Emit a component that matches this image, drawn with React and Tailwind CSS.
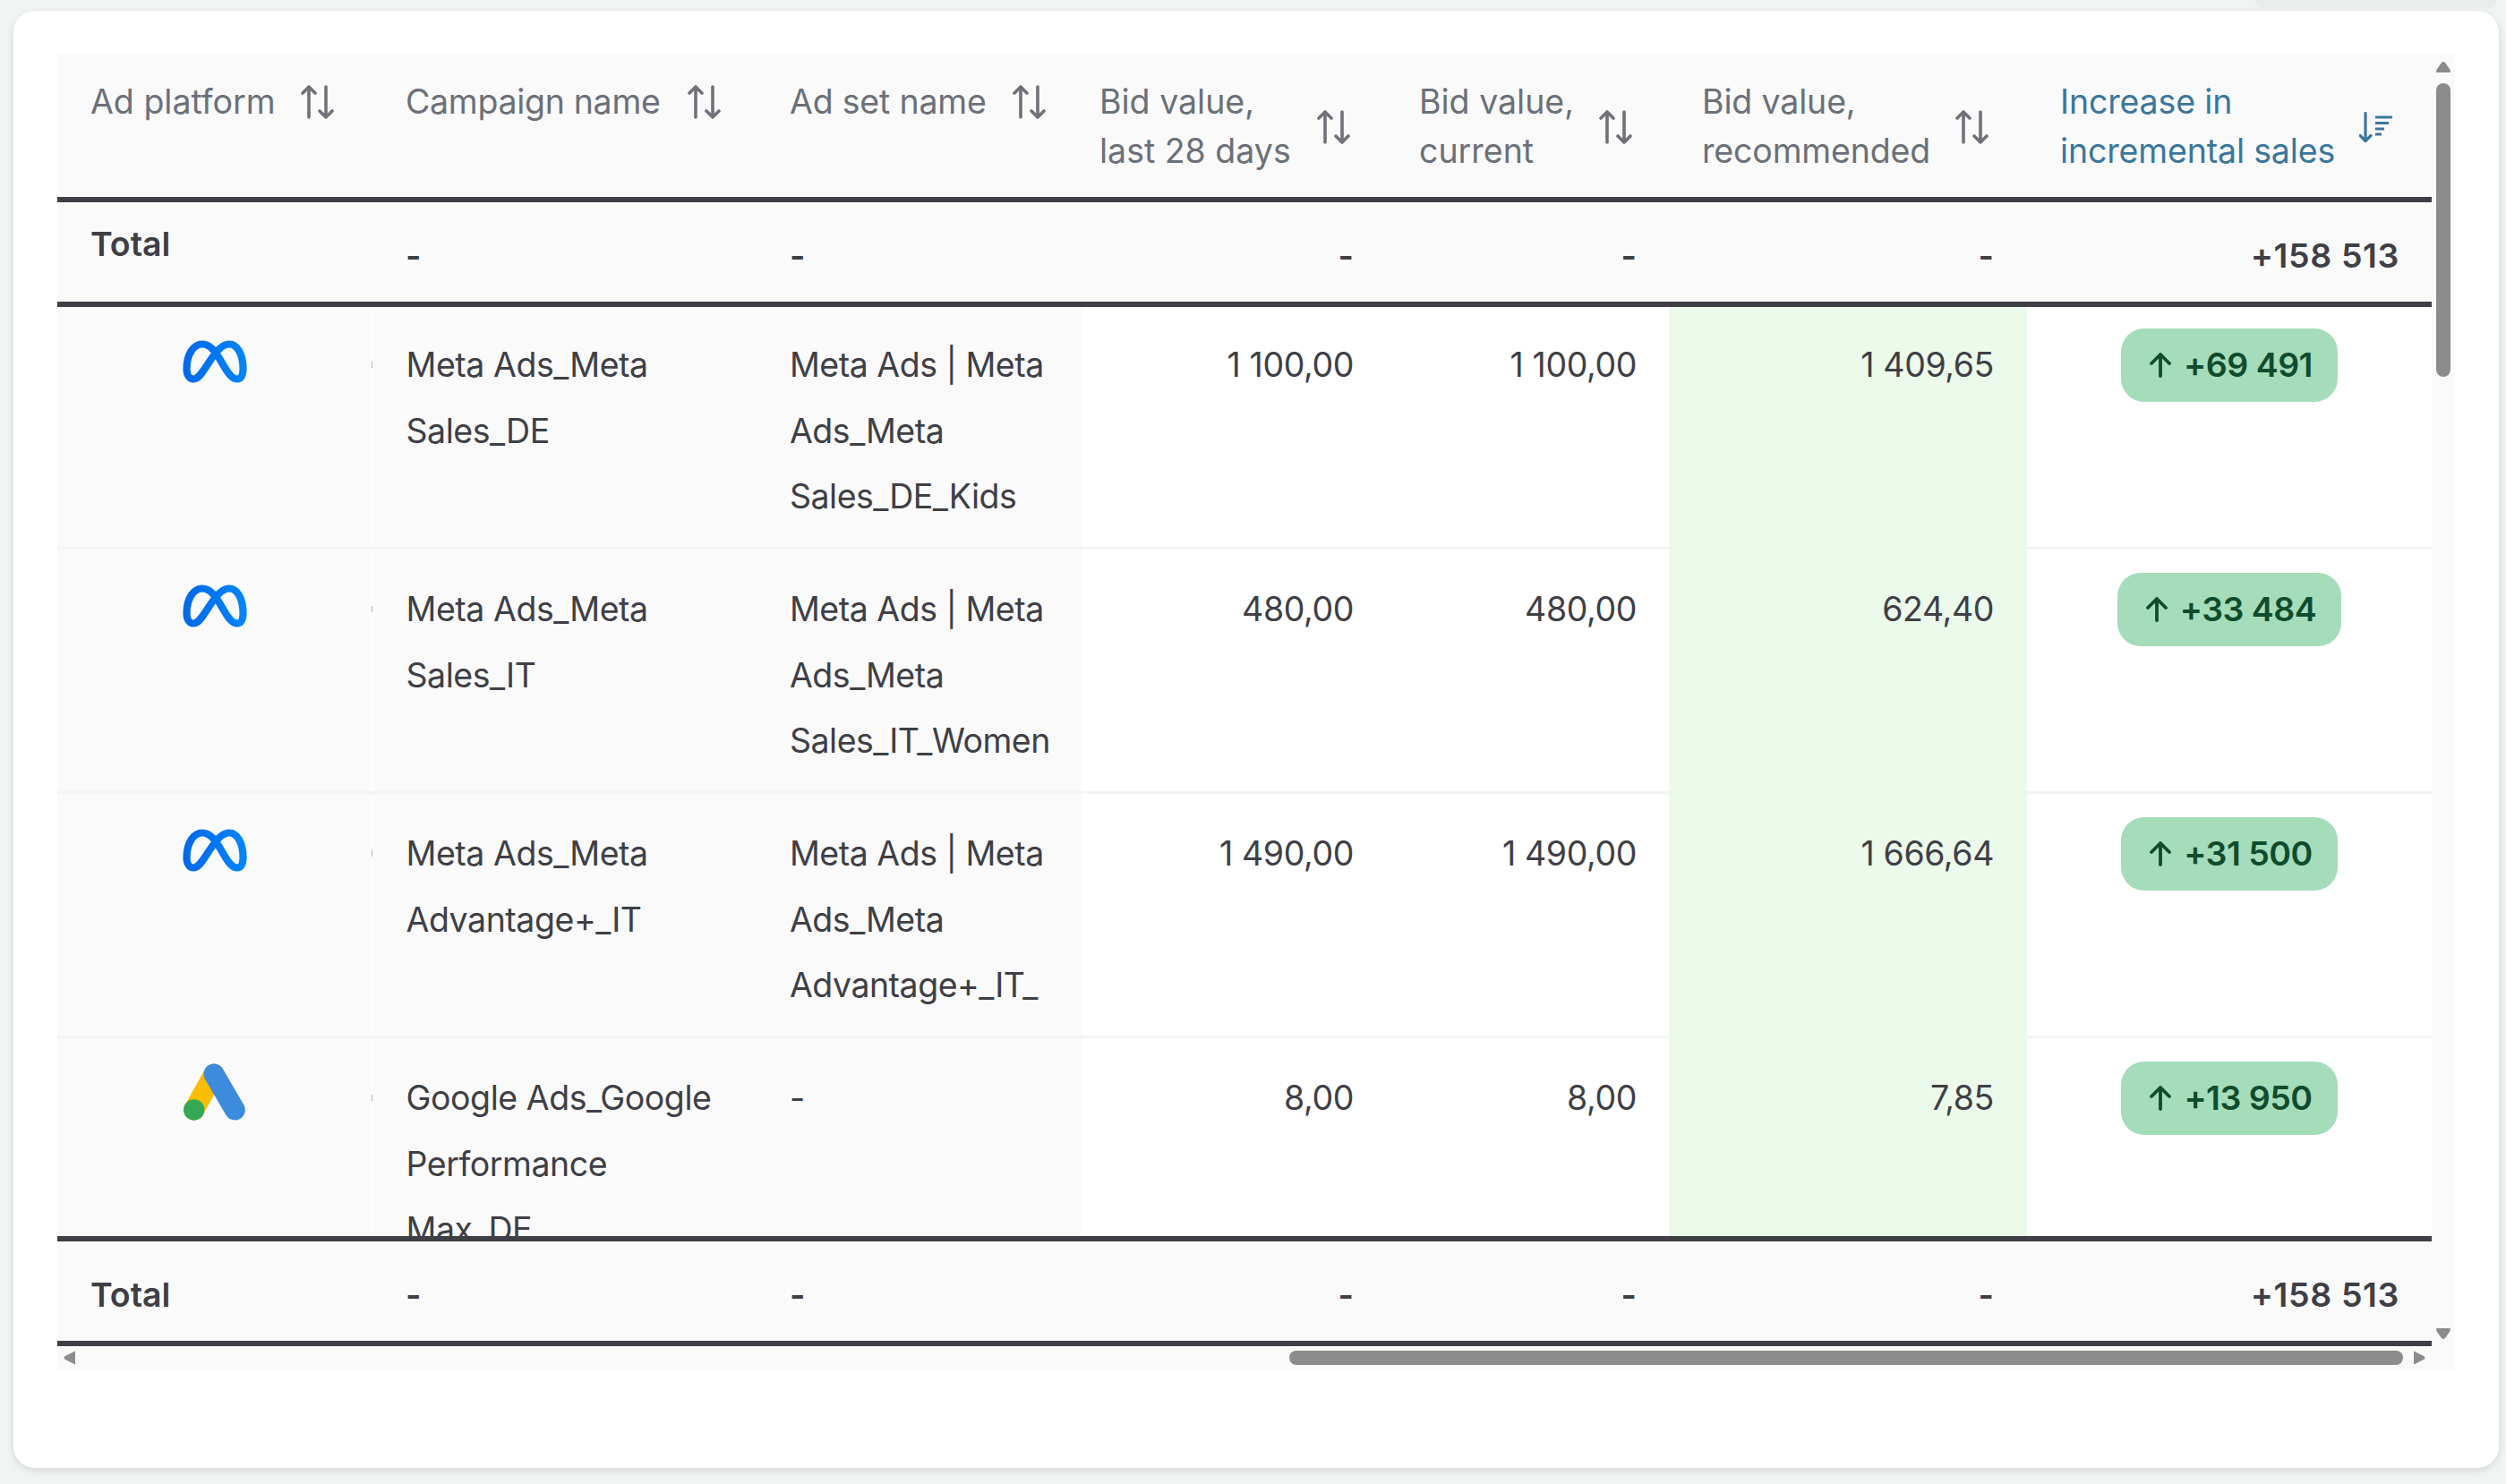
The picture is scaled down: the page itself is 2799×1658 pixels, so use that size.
import React from "react";

const cols = "grid grid-cols-[351px_432px_361px_340px_316px_400px_452px]";

function SortIcon() {
  return (
    <svg width="38" height="38" viewBox="0 0 38 38" fill="none" stroke="#71717a" strokeWidth="3.6" strokeLinecap="round" strokeLinejoin="round" className="shrink-0">
      <path d="M9 36V2M2 9l7-7 7 7" />
      <path d="M28 2v34M21 29l7 7 7-7" />
    </svg>
  );
}

function SortDescIcon() {
  return (
    <svg width="38" height="34" viewBox="0 0 38 34" fill="none" stroke="#3b769c" strokeWidth="3.2" strokeLinecap="round" strokeLinejoin="round" className="shrink-0">
      <path d="M7 1.500v31M1 26.500l6 6 6-6" />
      <path d="M18 6h19M18 12.500h15M18 19h10M18 25h7" strokeLinecap="butt" />
    </svg>
  );
}

function MetaLogo() {
  return (
    <svg width="72" height="48" viewBox="0 0 72 48" fill="none" className="absolute left-[140px] top-[39px]">
      <defs>
        <linearGradient id="metaG" x1="0" y1="0" x2="72" y2="0" gradientUnits="userSpaceOnUse">
          <stop offset="0" stopColor="#0068e8" />
          <stop offset="1" stopColor="#0085fc" />
        </linearGradient>
      </defs>
      <path
        d="M4.500 32C4.500 16 12 4.500 22 4.500 31 4.500 37 13 44 25.500 51 38 55.500 43.500 61 43.500 65 43.500 67.500 39.500 67.500 32 67.500 16 61 4.500 52 4.500 44 4.500 37.500 12 27 28.500 20.500 38.500 17 43.500 12 43.500 7.500 43.500 4.500 39 4.500 32Z"
        stroke="url(#metaG)"
        strokeWidth="8.200"
        strokeLinejoin="round"
      />
    </svg>
  );
}

function GoogleLogo() {
  return (
    <svg width="69" height="64" viewBox="0 0 69 64" fill="none" className="absolute left-[141px] top-[28px]">
      <path d="M34 12 11.700 52" stroke="#fbbc04" strokeWidth="23" strokeLinecap="round" />
      <path d="M34 12 57.300 52" stroke="#3d8bdc" strokeWidth="23" strokeLinecap="round" />
      <circle cx="11.700" cy="52" r="11.700" fill="#34a853" />
    </svg>
  );
}

function Head({ lines, active, pl = "pl-[37px]", gap, track = "", icon }) {
  return (
    <div className={`${pl} pt-[27px]`}>
      <div className={`flex items-center ${gap}`}>
        <div className={`leading-[54.500px] whitespace-nowrap ${track} ${active ? "text-[#3b769c]" : "text-[#6b7079]"}`}>
          {lines.map((l) => (
            <div key={l}>{l}</div>
          ))}
        </div>
        {icon}
      </div>
    </div>
  );
}

function TotalRow({ top }) {
  const d = "pt-[33px] leading-[54px]";
  return (
    <div className={`${cols} h-[111px] bg-[#fafafa] font-semibold text-[#3f3f46]`}>
      <div className={`pl-[37px] ${top ? "pt-[20px] leading-[54px]" : d}`}>Total</div>
      <div className={`pl-[38px] ${d}`}>-</div>
      <div className={`pl-[35px] ${d}`}>-</div>
      <div className={`pr-[36px] text-right ${d}`}>-</div>
      <div className={`pr-[36px] text-right ${d}`}>-</div>
      <div className={`pr-[37px] text-right ${d}`}>-</div>
      <div className={`pr-[36px] text-right tracking-[0.600px] ${d}`}>+158 513</div>
    </div>
  );
}

function Row({ logo, camp, set, v1, v2, v3, inc, first }) {
  return (
    <div className={`${cols} h-[273px] ${first ? "-mt-[2px]" : ""} border-b-[3px] border-[#f4f4f5] text-[#3f3f46] leading-[73.500px]`}>
      <div className="relative bg-[#fafafa]">{logo}</div>
      <div className="relative border-l border-white bg-[#fafafa] pl-[37.500px] pt-[30px] tracking-[-0.450px]">
        <div className="absolute -left-px top-[63px] h-[7px] w-px bg-[#b5b5b8]" />
        {camp.map((l) => (
          <div key={l} className="whitespace-nowrap">{l}</div>
        ))}
      </div>
      <div className="bg-[#fafafa] pl-[35px] pt-[30px] tracking-[-0.500px]">
        {set.map((l) => (
          <div key={l} className="whitespace-nowrap">{l}</div>
        ))}
      </div>
      <div className="bg-white pr-[36px] pt-[30px] text-right tracking-[-0.400px]">{v1}</div>
      <div className="bg-white pr-[36px] pt-[30px] text-right tracking-[-0.400px]">{v2}</div>
      <div className="-mb-[3px] bg-[#ebfaea] pr-[37px] pt-[30px] text-right tracking-[-0.400px]">{v3}</div>
      <div className="flex justify-center bg-white pt-[26px]">
        <div className="inline-flex h-[82px] items-center gap-[13px] self-start rounded-[26px] bg-[#a5dcba] pl-[31px] pr-[28px] font-semibold tracking-[-0.500px] text-[#0f4c2e]">
          <svg width="26" height="28" viewBox="0 0 26 28" fill="none" stroke="#0f4c2e" strokeWidth="3.800" strokeLinecap="round" strokeLinejoin="round">
            <path d="M13 26V2M3 12 13 2l10 10" />
          </svg>
          <span className="whitespace-nowrap leading-[54px]">{inc}</span>
        </div>
      </div>
    </div>
  );
}

const NS = "\u00a0";
const rows = [
  { logo: <MetaLogo />, camp: ["Meta Ads_Meta", "Sales_DE"], set: ["Meta Ads | Meta", "Ads_Meta", "Sales_DE_Kids"], v1: `1${NS}100,00`, v2: `1${NS}100,00`, v3: `1${NS}409,65`, inc: `+69${NS}491` },
  { logo: <MetaLogo />, camp: ["Meta Ads_Meta", "Sales_IT"], set: ["Meta Ads | Meta", "Ads_Meta", "Sales_IT_Women"], v1: "480,00", v2: "480,00", v3: "624,40", inc: `+33${NS}484` },
  { logo: <MetaLogo />, camp: ["Meta Ads_Meta", "Advantage+_IT"], set: ["Meta Ads | Meta", "Ads_Meta", "Advantage+_IT_"], v1: `1${NS}490,00`, v2: `1${NS}490,00`, v3: `1${NS}666,64`, inc: `+31${NS}500` },
  { logo: <GoogleLogo />, camp: ["Google Ads_Google", "Performance", "Max_DE"], set: ["-"], v1: "8,00", v2: "8,00", v3: "7,85", inc: `+13${NS}950` },
];

export default function App() {
  return (
    <div
      className="relative h-[1658px] w-[2799px] overflow-hidden bg-[#f0f4f3] pl-[15px] pt-[12px] text-[37.500px]"
      style={{ fontFamily: "Inter, 'Noto Sans', sans-serif" }}
    >
      <div className="absolute right-[10px] top-0 h-[9px] w-[270px] rounded-b-[12px] bg-[#e9edec]" />
      <div className="relative h-[1628px] w-[2776px] rounded-[24px] bg-white pl-[49px] pt-[48px] shadow-[0_3px_10px_rgba(0,0,0,0.12)]">
        <div className="flex h-[1470px] w-[2678px] bg-[#fafafa]">
          <div className="flex w-[2652px] flex-col">
            <div className={`${cols} h-[160px]`}>
              <Head lines={["Ad platform"]} gap="gap-[28px]" icon={<SortIcon />} />
              <Head lines={["Campaign name"]} pl="pl-[38px]" gap="gap-[30px]" track="tracking-[-0.300px]" icon={<SortIcon />} />
              <Head lines={["Ad set name"]} pl="pl-[35px]" gap="gap-[29px]" track="tracking-[-0.200px]" icon={<SortIcon />} />
              <Head lines={["Bid value,", "last 28 days"]} pl="pl-[20px]" gap="gap-[29px]" icon={<SortIcon />} />
              <Head lines={["Bid value,", "current"]} gap="gap-[28px]" icon={<SortIcon />} />
              <Head lines={["Bid value,", "recommended"]} gap="gap-[28px]" track="tracking-[-0.150px]" icon={<SortIcon />} />
              <Head lines={["Increase in", "incremental sales"]} gap="gap-[27px]" track="tracking-[-0.150px]" active icon={<SortDescIcon />} />
            </div>
            <div className="h-[6px] shrink-0 bg-[#3f4046]" />
            <TotalRow top />
            <div className="h-[6px] shrink-0 bg-[#3f4046]" />
            <div className="h-[1038px] shrink-0 overflow-hidden bg-white">
              {rows.map((r, i) => (
                <Row key={i} {...r} first={i === 0} />
              ))}
            </div>
            <div className="h-[6px] shrink-0 bg-[#3f4046]" />
            <TotalRow />
            <div className="h-[6px] shrink-0 bg-[#3f4046]" />
            <div className="flex h-[26px] shrink-0 items-start pl-[7px] pt-[5px]">
              <svg width="13" height="16" viewBox="0 0 13 16" className="shrink-0"><path d="M13 0.500V15.500L1 9.500Q0 8 1 6.500Z" fill="#8c8c8c" /></svg>
              <div className="ml-[1356px] h-[16px] w-[1244px] rounded-full bg-[#8c8c8c]" />
              <svg width="13" height="16" viewBox="0 0 13 16" className="ml-[12px] shrink-0"><path d="M0 0.500V15.500L12 9.500Q13 8 12 6.500Z" fill="#8c8c8c" /></svg>
            </div>
          </div>
          <div className="flex w-[26px] flex-col pl-[5px] pt-[9px]">
            <svg width="16" height="12" viewBox="0 0 16 12" className="shrink-0"><path d="M0.500 12Q-0.500 10 1 8L6 1Q8 -1 10 1L15 8Q16.500 10 15.500 12Z" fill="#8c8c8c" /></svg>
            <div className="mt-[12px] h-[328px] w-[16px] rounded-full bg-[#8c8c8c]" />
            <svg width="16" height="12" viewBox="0 0 16 12" className="mt-[1063px] shrink-0"><path d="M0.500 0Q-0.500 2 1 4L6 11Q8 13 10 11L15 4Q16.500 2 15.500 0Z" fill="#8c8c8c" /></svg>
          </div>
        </div>
      </div>
    </div>
  );
}
